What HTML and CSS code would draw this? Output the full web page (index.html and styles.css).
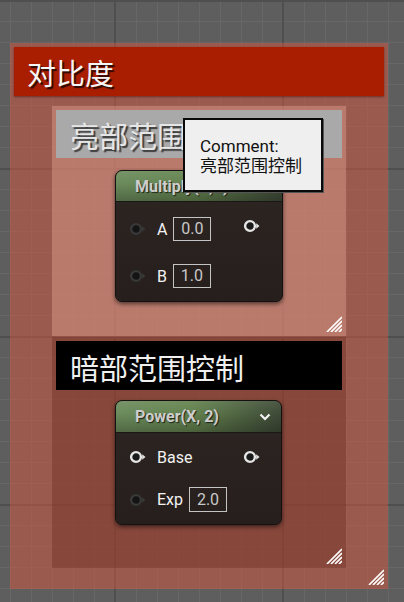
FILE: index.html
```html
<!DOCTYPE html>
<html>
<head>
<meta charset="utf-8">
<link rel="stylesheet" href="styles.css">
</head>
<body>
<div class="canvas">
  <div class="comment outer">
    <div class="c-title red">对比度</div>
    <svg class="resize" viewBox="0 0 16 16" width="16" height="16"><g stroke="#fff" stroke-width="1.7"><line x1="1" y1="16" x2="16" y2="1"/><line x1="5" y1="16" x2="16" y2="5"/><line x1="9" y1="16" x2="16" y2="9"/><line x1="13" y1="16" x2="16" y2="13"/></g></svg>
  </div>
  <div class="comment bright">
    <div class="c-title grey">亮部范围控制</div>
    <svg class="resize" viewBox="0 0 16 16" width="16" height="16"><g stroke="#fff" stroke-width="1.7"><line x1="1" y1="16" x2="16" y2="1"/><line x1="5" y1="16" x2="16" y2="5"/><line x1="9" y1="16" x2="16" y2="9"/><line x1="13" y1="16" x2="16" y2="13"/></g></svg>
  </div>
  <div class="comment dark">
    <div class="c-title black">暗部范围控制</div>
    <svg class="resize" viewBox="0 0 16 16" width="16" height="16"><g stroke="#fff" stroke-width="1.7"><line x1="1" y1="16" x2="16" y2="1"/><line x1="5" y1="16" x2="16" y2="5"/><line x1="9" y1="16" x2="16" y2="9"/><line x1="13" y1="16" x2="16" y2="13"/></g></svg>
  </div>

  <div class="node multiply">
    <div class="n-head">Multiply(X,Y)</div>
    <div class="n-body">
      <div class="inputs">
        <div class="row">
          <svg class="pin" viewBox="0 0 17 14" width="17" height="14"><circle cx="7" cy="7" r="4.9" fill="#141414" stroke="#383838" stroke-width="2.4"/><path d="M13.2 4.3 L16.5 7 L13.2 9.7 Z" fill="#383838"/></svg>
          <span class="lbl">A</span><span class="val">0.0</span>
        </div>
        <div class="row">
          <svg class="pin" viewBox="0 0 17 14" width="17" height="14"><circle cx="7" cy="7" r="4.9" fill="#141414" stroke="#383838" stroke-width="2.4"/><path d="M13.2 4.3 L16.5 7 L13.2 9.7 Z" fill="#383838"/></svg>
          <span class="lbl">B</span><span class="val">1.0</span>
        </div>
      </div>
      <svg class="pin out out-m" viewBox="0 0 17 14" width="17" height="14"><circle cx="7" cy="7" r="4.9" fill="#1a1a1a" stroke="#e6e6e6" stroke-width="2.4"/><path d="M13.2 4.3 L16.5 7 L13.2 9.7 Z" fill="#e6e6e6"/></svg>
    </div>
  </div>

  <div class="node power">
    <div class="n-head">Power(X, 2)
      <svg class="chev" viewBox="0 0 12 8" width="12" height="8"><path d="M1.5 1.5 L6 6 L10.5 1.5" fill="none" stroke="#f2f2f2" stroke-width="2.2"/></svg>
    </div>
    <div class="n-body pbody">
      <div class="inputs">
        <div class="row">
          <svg class="pin" viewBox="0 0 17 14" width="17" height="14"><circle cx="7" cy="7" r="4.9" fill="#1a1a1a" stroke="#e6e6e6" stroke-width="2.4"/><path d="M13.2 4.3 L16.5 7 L13.2 9.7 Z" fill="#e6e6e6"/></svg>
          <span class="lbl">Base</span>
        </div>
        <div class="row exp">
          <svg class="pin" viewBox="0 0 17 14" width="17" height="14"><circle cx="7" cy="7" r="4.9" fill="#141414" stroke="#383838" stroke-width="2.4"/><path d="M13.2 4.3 L16.5 7 L13.2 9.7 Z" fill="#383838"/></svg>
          <span class="lbl">Exp</span><span class="val">2.0</span>
        </div>
      </div>
      <svg class="pin out out-p" viewBox="0 0 17 14" width="17" height="14"><circle cx="7" cy="7" r="4.9" fill="#1a1a1a" stroke="#e6e6e6" stroke-width="2.4"/><path d="M13.2 4.3 L16.5 7 L13.2 9.7 Z" fill="#e6e6e6"/></svg>
    </div>
  </div>

  <div class="tooltip">Comment:<br>亮部范围控制</div>
</div>
</body>
</html>
```

FILE: styles.css
```css
html, body {
  margin: 0;
  padding: 0;
}
body {
  width: 404px;
  height: 602px;
  overflow: hidden;
  font-family: Roboto, "Noto Sans CJK SC", sans-serif;
}
.canvas {
  position: relative;
  width: 404px;
  height: 602px;
  background-color: #5e5e5e;
  background-image:
    linear-gradient(to right, #4f4f4f 2px, transparent 2px),
    linear-gradient(to bottom, #4f4f4f 2px, transparent 2px),
    linear-gradient(to right, #676767 1px, transparent 1px),
    linear-gradient(to bottom, #676767 1px, transparent 1px);
  background-size: 168px 168px, 168px 168px, 21px 21px, 21px 21px;
  background-position: 114px 0, 0 0, 10px 0, 0 0;
}

/* comment boxes */
.comment {
  position: absolute;
  box-sizing: border-box;
  padding: 4px;
}
.outer {
  left: 10px;
  top: 43px;
  width: 378px;
  height: 546px;
  background: rgba(214, 86, 62, 0.5);
}
.bright {
  left: 52px;
  top: 106px;
  width: 294px;
  height: 230px;
  background: rgba(216, 154, 138, 0.5);
}
.dark {
  left: 52px;
  top: 337px;
  width: 294px;
  height: 231px;
  background: rgba(110, 46, 34, 0.42);
}
.c-title {
  font-family: "Noto Sans CJK SC", sans-serif;
  font-size: 29px;
  height: 48px;
  line-height: 48px;
  box-sizing: border-box;
}
.red {
  background: #a91e00;
  color: #f6f6f6;
  padding-left: 13px;
  height: 49px;
  line-height: 50px;
  text-shadow: 2px 2px 1px #2a0a00;
  box-shadow: 0 1px 2px rgba(60, 0, 0, 0.5);
}
.grey {
  background: #a9a9a9;
  color: #e6e6e6;
  padding-left: 14px;
  line-height: 50px;
  text-shadow: 2px 2px 1px #3c3c3c;
}
.black {
  background: #000;
  color: #f0f0f0;
  padding-left: 14px;
  height: 49px;
  line-height: 52px;
}
.resize {
  position: absolute;
  right: 4px;
  bottom: 4px;
}

/* nodes */
.node {
  position: absolute;
  box-sizing: border-box;
  border: 1px solid #141110;
  border-radius: 7px;
  background: #2a2220;
  box-shadow: 0 2px 4px rgba(0, 0, 0, 0.55);
  overflow: hidden;
}
.multiply {
  left: 115px;
  top: 170px;
  width: 168px;
  height: 132px;
}
.power {
  left: 115px;
  top: 400px;
  width: 167px;
  height: 125px;
}
.n-head {
  height: 31px;
  box-sizing: border-box;
  padding-left: 19px;
  display: flex;
  align-items: center;
  justify-content: space-between;
  padding-right: 10px;
  font-size: 16px;
  font-weight: 700;
  color: #cdcdcd;
  text-shadow: 1px 1px 1px #1c2418;
  background:
    linear-gradient(to bottom, rgba(255,255,255,0.08) 0%, rgba(0,0,0,0) 40%, rgba(0,0,0,0.25) 100%),
    linear-gradient(to right, #6c8c5d 0%, #64834f 45%, #3e4a37 100%);
  border-bottom: 1px solid #1a1816;
}
.power .n-head {
  height: 32px;
}
.chev {
  display: block;
}
.n-body {
  display: flex;
  justify-content: space-between;
  align-items: flex-start;
  padding: 15px 15px 0 13px;
  background: linear-gradient(to bottom, #2c2421 0%, #231c1a 100%);
  height: 100%;
}
.pbody {
  padding-top: 12px;
}
.inputs {
  display: flex;
  flex-direction: column;
  gap: 23px;
}
.pbody .inputs {
  gap: 18px;
}
.row {
  display: flex;
  align-items: center;
  height: 24px;
}
.row.exp {
  height: 25px;
}
.pin {
  display: block;
  flex: none;
}
.lbl {
  margin-left: 11px;
  font-size: 16px;
  color: #f2f2f2;
}
.val {
  margin-left: 6px;
  box-sizing: border-box;
  width: 38px;
  height: 24px;
  border: 1px solid #c4c4c4;
  color: #c8c8c8;
  font-size: 16px;
  line-height: 22px;
  text-align: center;
}
.exp .val {
  height: 25px;
  line-height: 23px;
}
.out-m {
  margin-top: 2px;
  margin-right: 7px;
}
.out-p {
  margin-top: 5px;
  margin-right: 6px;
}

/* tooltip */
.tooltip {
  position: absolute;
  left: 183px;
  top: 118px;
  width: 140px;
  height: 74px;
  box-sizing: border-box;
  border: 2px solid #0a0a0a;
  background: #efefef;
  padding: 16px 0 0 15px;
  font-family: Roboto, "Noto Sans CJK SC", sans-serif;
  font-size: 17px;
  line-height: 20px;
  color: #111;
  box-shadow: 1px 1px 0 #555;
}
```
